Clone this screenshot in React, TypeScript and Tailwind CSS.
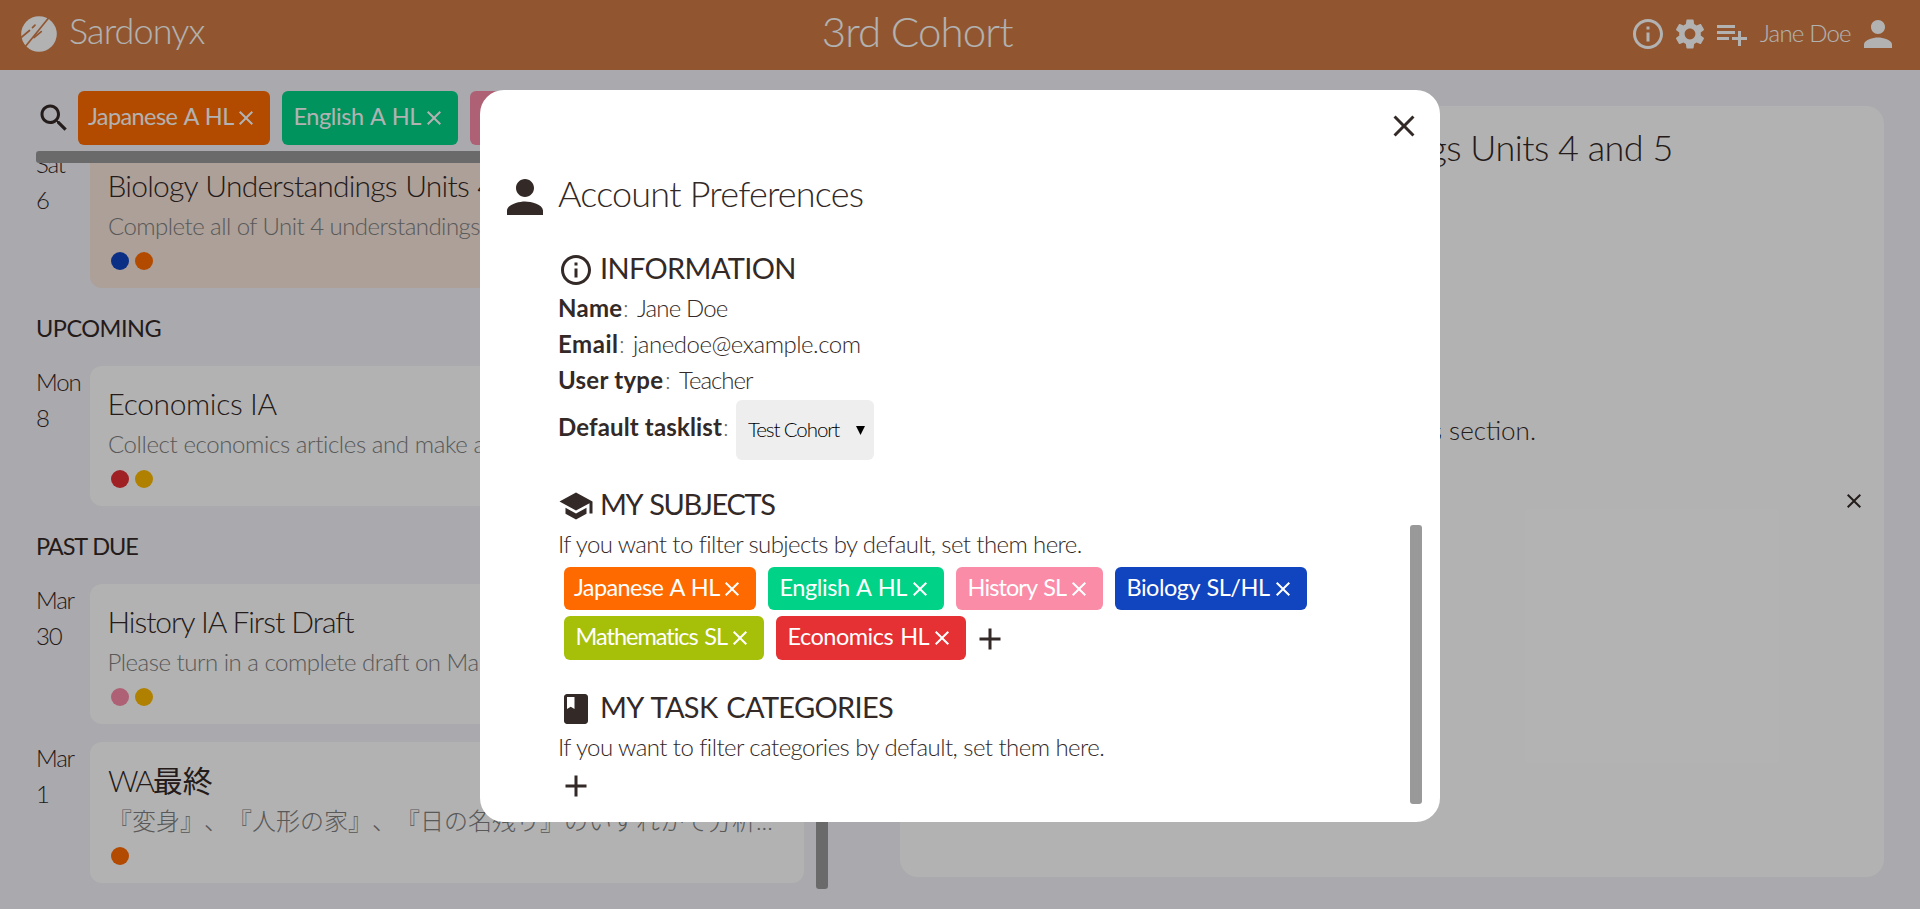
import type { ReactNode } from 'react';

const ICONS = {
  info: 'M11 7h2v2h-2zm0 4h2v6h-2zm1-9C6.48 2 2 6.48 2 12s4.48 10 10 10 10-4.48 10-10S17.52 2 12 2zm0 18c-4.41 0-8-3.59-8-8s3.59-8 8-8 8 3.59 8 8-3.59 8-8 8z',
  settings:
    'M19.14 12.94c.04-.3.06-.61.06-.94 0-.32-.02-.64-.07-.94l2.03-1.58c.18-.14.23-.41.12-.61l-1.92-3.32c-.12-.22-.37-.29-.59-.22l-2.39.96c-.5-.38-1.03-.7-1.62-.94l-.36-2.54c-.04-.24-.24-.41-.48-.41h-3.84c-.24 0-.43.17-.47.41l-.36 2.54c-.59.24-1.13.57-1.62.94l-2.39-.96c-.22-.08-.47 0-.59.22L2.74 8.87c-.12.21-.08.47.12.61l2.03 1.58c-.05.3-.09.63-.09.94s.02.64.07.94l-2.03 1.58c-.18.14-.23.41-.12.61l1.92 3.32c.12.22.37.29.59.22l2.39-.96c.5.38 1.03.7 1.62.94l.36 2.54c.05.24.24.41.48.41h3.84c.24 0 .44-.17.47-.41l.36-2.54c.59-.24 1.13-.56 1.62-.94l2.39.96c.22.08.47 0 .59-.22l1.92-3.32c.12-.22.07-.47-.12-.61l-2.01-1.58zM12 15.6c-1.98 0-3.6-1.62-3.6-3.6s1.62-3.6 3.6-3.6 3.6 1.62 3.6 3.6-1.62 3.6-3.6 3.6z',
  playlistAdd: 'M14 10H2v2h12v-2zm0-4H2v2h12V6zm4 8v-4h-2v4h-4v2h4v4h2v-4h4v-2h-4zM2 16h8v-2H2v2z',
  person: 'M12 12c2.21 0 4-1.79 4-4s-1.79-4-4-4-4 1.79-4 4 1.79 4 4 4zm0 2c-2.67 0-8 1.34-8 4v2h16v-2c0-2.66-5.33-4-8-4z',
  search:
    'M15.5 14h-.79l-.28-.27C15.41 12.59 16 11.11 16 9.5 16 5.91 13.09 3 9.5 3S3 5.91 3 9.5 5.91 16 9.5 16c1.61 0 3.09-.59 4.23-1.57l.27.28v.79l5 4.99L20.49 19l-4.99-5zm-6 0C7.01 14 5 11.99 5 9.5S7.01 5 9.5 5 14 7.01 14 9.5 11.99 14 9.5 14z',
  close: 'M19 6.41L17.59 5 12 10.59 6.41 5 5 6.41 10.59 12 5 17.59 6.41 19 12 13.41 17.59 19 19 17.59 13.41 12z',
  add: 'M19 13h-6v6h-2v-6H5v-2h6V5h2v6h6v2z',
  school: 'M5 13.18v4L12 21l7-3.82v-4L12 17l-7-3.82zM12 3L1 9l11 6 9-4.91V17h2V9L12 3z',
  book: 'M18 2H6c-1.1 0-2 .9-2 2v16c0 1.1.9 2 2 2h12c1.1 0 2-.9 2-2V4c0-1.1-.9-2-2-2zM6 4h5v8l-2.5-1.5L6 12V4z',
};

function Icon({ name, className }: { name: keyof typeof ICONS; className: string }) {
  return (
    <svg viewBox="0 0 24 24" fill="currentColor" className={`shrink-0 ${className}`}>
      <path d={ICONS[name]} />
    </svg>
  );
}

function Logo() {
  return (
    <svg viewBox="0 0 36 36" className="size-9 shrink-0">
      <circle cx="18" cy="18" r="17.8" fill="#fff" />
      <g stroke="#d07c46" strokeWidth="1.7" strokeLinecap="round">
        <path d="M28 1.5L4 31" strokeLinecap="butt" />
        <path d="M-1 22.5L8.5 14.5" />
        <path d="M11.5 11.7L14 9.2" />
        <path d="M13 21.5L20.3 15.6" />
      </g>
    </svg>
  );
}

type Subject = { name: string; color: string; text: string };

const SUBJECTS: Subject[] = [
  { name: 'Japanese A HL', color: 'bg-[#ff6a00]', text: 'w-36 tracking-[-0.6px] indent-[-2px]' },
  { name: 'English A HL', color: 'bg-[#00d387]', text: 'w-32 tracking-[-0.41px] indent-[-0.5px]' },
  { name: 'History SL', color: 'bg-[#fa8ca8]', text: 'w-[99px] tracking-[-0.89px] indent-[-0.5px]' },
  { name: 'Biology SL/HL', color: 'bg-[#1144bf]', text: 'w-36 tracking-[-0.5px] indent-[-0.5px]' },
  { name: 'Mathematics SL', color: 'bg-[#a6c00a]', text: 'w-[152px] tracking-[-1px] indent-[-0.5px]' },
  { name: 'Economics HL', color: 'bg-[#e53034]', text: 'w-[142px] tracking-[-0.5px] indent-[-0.5px]' },
];

function Pill({ subject, size }: { subject: Subject; size: string }) {
  return (
    <div className={`flex shrink-0 items-center rounded-md px-3 text-white ${subject.color} ${size}`}>
      <span className={`whitespace-nowrap pb-1 text-[23.5px] leading-9 font-normal [word-spacing:1.5px] ${subject.text}`}>
        {subject.name}
      </span>
      <Icon name="close" className="size-6" />
    </div>
  );
}

type TaskProps = {
  day: string;
  date: string;
  title: ReactNode;
  desc: string;
  descClass: string;
  titleClass: string;
  dots: string[];
  card?: string;
  row?: string;
};

function Task({ day, date, title, desc, descClass, titleClass, dots, card = 'bg-white pt-[15px]', row = '' }: TaskProps) {
  return (
    <div className={`flex ${row}`}>
      <div className="-mt-0.5 w-[54px] shrink-0 text-2xl leading-9 tracking-[-1.2px]">
        <div>{day}</div>
        <div>{date}</div>
      </div>
      <div className={`w-[714px] rounded-xl px-[18px] pb-[18px] ${card}`}>
        <div className={`truncate text-[30px] leading-[45px] ${titleClass}`}>{title}</div>
        <div className={`truncate text-2xl leading-9 text-[#808080] ${descClass}`}>{desc}</div>
        <div className="mt-2 flex gap-1.5 pl-[3px]">
          {dots.map((dot) => (
            <span key={dot} className={`size-[18px] rounded-full ${dot}`} />
          ))}
        </div>
      </div>
    </div>
  );
}

function SectionTitle({ children, className }: { children: string; className: string }) {
  return <h2 className={`h-[78px] pt-[22px] text-[23.5px] leading-9 font-normal ${className}`}>{children}</h2>;
}

function Heading({ icon, children, className }: { icon: keyof typeof ICONS; children: string; className: string }) {
  return (
    <div className="mb-0.5 flex h-9 items-center gap-1.5">
      <Icon name={icon} className="size-9" />
      <h3 className={`whitespace-nowrap pb-[5px] text-[29px] leading-9 font-normal [word-spacing:2px] ${className}`}>{children}</h3>
    </div>
  );
}

function Field({ label, value, labelClass, valueClass }: { label: string; value: string; labelClass: string; valueClass: string }) {
  return (
    <div className="flex h-9 whitespace-nowrap">
      <b className={`font-bold ${labelClass}`}>{label}</b>
      <span className={valueClass}>
        <span className="inline-block w-3.5 text-[#332927]/70">:</span>
        {value}
      </span>
    </div>
  );
}

function Preferences() {
  return (
    <div className="relative h-[732px] w-[960px] rounded-3xl bg-white px-[18px] pt-20">
      <Icon name="close" className="absolute top-[18px] right-[18px] size-9" />
      <div className="flex h-[54px] items-center gap-1.5">
        <Icon name="person" className="size-[54px]" />
        <h1 className="pb-2 text-4xl leading-[46px] tracking-[-0.78px]">Account Preferences</h1>
      </div>
      <div className="ml-[60px] w-[800px] pt-7 text-2xl leading-9">
        <Heading icon="info" className="tracking-[-0.65px]">INFORMATION</Heading>
        <Field label="Name" value="Jane Doe" labelClass="w-[65px] tracking-[0.28px]" valueClass="tracking-[-0.86px]" />
        <Field label="Email" value="janedoe@example.com" labelClass="w-[61px] tracking-[0.52px]" valueClass="tracking-[-0.48px]" />
        <Field label="User type" value="Teacher" labelClass="w-[107px] tracking-[0.25px]" valueClass="tracking-[-1px]" />
        <div className="mt-0.5 flex h-[60px] items-center whitespace-nowrap">
          <b className="w-[165px] pb-1.5 font-bold tracking-[0.14px]">Default tasklist</b>
          <span className="w-[13px] pb-1.5 text-[#332927]/70">:</span>
          <div className="flex h-[60px] w-[138px] items-center justify-between rounded-md bg-[#eee] pr-[9px] pl-3 text-black">
            <span className="pb-[3px] text-[20.5px] tracking-[-1.1px]">Test Cohort</span>
            <svg viewBox="0 0 9 9" className="size-[9px]">
              <path d="M0 0h9L4.5 9z" />
            </svg>
          </div>
        </div>
        <div className="h-7" />
        <Heading icon="school" className="tracking-[-1.36px]">MY SUBJECTS</Heading>
        <p className="whitespace-nowrap tracking-[-0.6px]">If you want to filter subjects by default, set them here.</p>
        <div className="mt-[5px] flex flex-wrap gap-x-3 gap-y-1.5 pl-1.5">
          {SUBJECTS.map((subject, i) => (
            <Pill key={subject.name} subject={subject} size={i < 4 ? 'h-[43px]' : 'h-11'} />
          ))}
          <Icon name="add" className="mt-[5px] -ml-1.5 size-9" />
        </div>
        <div className="h-[31px]" />
        <Heading icon="book" className="tracking-[-0.66px]">MY TASK CATEGORIES</Heading>
        <p className="whitespace-nowrap tracking-[-0.56px]">If you want to filter categories by default, set them here.</p>
        <Icon name="add" className="mt-[3px] size-9" />
      </div>
      <div className="absolute top-[435px] right-[18px] h-[279px] w-3 rounded-[3px] bg-[#999]" />
    </div>
  );
}

export default function App() {
  return (
    <div className="relative flex h-[909px] w-[1920px] flex-col overflow-hidden bg-[#f3f2f9] font-['Lato','Noto_Sans_CJK_JP',sans-serif] font-light text-[#332927]">
      <header className="flex h-[70px] shrink-0 items-center justify-between bg-[#d07c46] px-[21px] text-white">
        <div className="flex items-center gap-3">
          <div className="pb-0.5">
            <Logo />
          </div>
          <span className="pb-2.5 text-4xl leading-[46px] tracking-[-0.87px]">Sardonyx</span>
        </div>
        <div className="pb-[9px] text-center text-[42px] leading-[54px] tracking-[-0.9px]">3rd Cohort</div>
        <div className="flex items-center justify-end">
          <Icon name="info" className="mb-0.5 size-9" />
          <Icon name="settings" className="mb-0.5 ml-1.5 size-9" />
          <Icon name="playlistAdd" className="mb-0.5 ml-1.5 size-9" />
          <span className="ml-2.5 w-[97px] whitespace-nowrap pb-[5px] text-2xl leading-9 tracking-[-0.8px]">Jane Doe</span>
          <Icon name="person" className="mb-0.5 size-[42px]" />
        </div>
      </header>

      <main className="flex min-h-0 flex-1">
        <section className="flex w-[804px] flex-col pl-9">
          <div className="mt-[21px] flex h-[54px] shrink-0 items-center gap-3 overflow-hidden">
            <Icon name="search" className="-mr-1.5 size-9" />
            {SUBJECTS.map((subject) => (
              <Pill key={subject.name} subject={subject} size="h-[54px]" />
            ))}
          </div>
          <div className="mt-1.5 h-3 w-[600px] shrink-0 rounded-[3px] bg-[#999]" />
          <div className="min-h-0 flex-1 overflow-hidden">
            <Task
              row="-mt-[15px]"
              card="bg-[#f6e5db] pt-[15px]"
              day="Sat"
              date="6"
              title="Biology Understandings Units 4 and 5"
              titleClass="tracking-[-0.78px] [word-spacing:1px] indent-[-0.5px]"
              desc="Complete all of Unit 4 understandings"
              descClass="tracking-[-0.54px]"
              dots={['bg-[#1144bf]', 'bg-[#ff6a00]']}
            />
            <SectionTitle className="tracking-[-0.5px]">UPCOMING</SectionTitle>
            <Task
              day="Mon"
              date="8"
              title="Economics IA"
              titleClass="tracking-[-0.37px] indent-[-0.5px]"
              desc="Collect economics articles and make a portfolio"
              descClass="tracking-[-0.39px]"
              dots={['bg-[#e53034]', 'bg-[#fdb900]']}
            />
            <SectionTitle className="tracking-[-1.1px] [word-spacing:1px]">PAST DUE</SectionTitle>
            <Task
              row="mb-[18px]"
              day="Mar"
              date="30"
              title="History IA First Draft"
              titleClass="tracking-[-1.05px] indent-[-0.5px]"
              desc="Please turn in a complete draft on March"
              descClass="tracking-[-0.49px] indent-[-0.5px]"
              dots={['bg-[#fa8ca8]', 'bg-[#fdb900]']}
            />
            <Task
              card="bg-white pt-4"
              day="Mar"
              date="1"
              title={
                <>
                  <span className="tracking-[-2.2px]">WA</span>
                  <span className="font-normal">最終</span>
                </>
              }
              titleClass=""
              desc="『変身』、『人形の家』、『日の名残り』のいずれかで分析..."
              descClass="[text-spacing-trim:space-all]"
              dots={['bg-[#ff6a00]']}
            />
          </div>
        </section>

        <div className="ml-3 flex w-3 flex-col justify-end pb-5">
          <div className="h-[360px] rounded-[3px] bg-[#999]" />
        </div>

        <section className="mt-9 ml-[72px] h-[771px] w-[984px] rounded-[18px] bg-white px-[18px] pt-[18px]">
          <h1 className="pr-[5px] text-center text-4xl leading-[46px] tracking-[-0.53px]">Biology Understandings Units 4 and 5</h1>
          <p className="mt-[242px] w-[618px] text-right text-[26px] leading-9">Complete all of Unit 4 understandings in this section.</p>
          <div className="mt-[41px] flex justify-end">
            <Icon name="close" className="size-6" />
          </div>
        </section>
      </main>

      <div className="absolute inset-0 flex items-start justify-center bg-black/30 pt-[90px]">
        <Preferences />
      </div>
    </div>
  );
}
